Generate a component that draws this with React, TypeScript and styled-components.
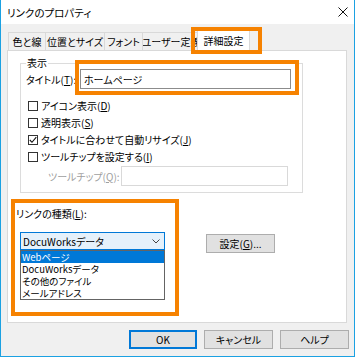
import React from 'react'
import styled, { createGlobalStyle } from 'styled-components'

const GlobalStyle = createGlobalStyle`
  body {
    margin: 0;
    background: #fff;
  }
  * {
    box-sizing: border-box;
  }
`

const Window = styled.div`
  position: relative;
  width: 355px;
  height: 357px;
  display: flex;
  flex-direction: column;
  background: #f0f0f0;
  border: 1px solid #1ba1e2;
  border-top: none;
  font-family: 'Noto Sans CJK JP', 'Noto Sans', sans-serif;
  font-size: 10px;
  font-feature-settings: 'palt';
  color: #000;
`

const TitleBar = styled.div`
  height: 24px;
  flex: none;
  display: flex;
  align-items: center;
  justify-content: space-between;
  padding: 0 6px;
  background: #fff;
  font-size: 10.5px;
`

const Body = styled.div`
  flex: 1;
  padding: 6px 5px 0 6px;
  display: flex;
  flex-direction: column;
`

const TabRow = styled.div`
  display: flex;
  align-items: flex-end;
  height: 20px;
  margin-left: 1px;
`

const Tab = styled.div<{ $w: number; $active?: boolean }>`
  width: ${({ $w }) => $w}px;
  height: ${({ $active }) => ($active ? 22 : 18)}px;
  margin-right: -1px;
  margin-left: ${({ $active }) => ($active ? -2 : 0)}px;
  margin-bottom: ${({ $active }) => ($active ? -1 : 0)}px;
  display: flex;
  align-items: center;
  justify-content: center;
  white-space: nowrap;
  overflow: hidden;
  background: ${({ $active }) => ($active ? '#fff' : '#f0f0f0')};
  border: 1px solid #d9d9d9;
  border-bottom: none;
  position: relative;
  z-index: ${({ $active }) => ($active ? 2 : 1)};
`

const Panel = styled.div`
  height: 273px;
  margin-right: 2px;
  padding: 6px 12px 0 12px;
  background: #fff;
  border: 1px solid #d9d9d9;
  display: flex;
  flex-direction: column;
`

const Group = styled.fieldset`
  margin: 0;
  width: 283px;
  padding: 0 10px 6px 5px;
  border: 1px solid #dcdcdc;
`

const Legend = styled.legend`
  padding: 0 1px;
  line-height: 12px;
`

const FieldRow = styled.div<{ $indent?: number }>`
  display: flex;
  align-items: center;
  height: 20px;
  padding-left: ${({ $indent }) => $indent ?? 0}px;
`

const FieldLabel = styled.span<{ $w: number; $disabled?: boolean }>`
  width: ${({ $w }) => $w}px;
  flex: none;
  white-space: nowrap;
  color: ${({ $disabled }) => ($disabled ? '#a0a0a0' : '#000')};
`

const TextBox = styled.div<{ $w: number; $disabled?: boolean }>`
  width: ${({ $w }) => $w}px;
  height: 20px;
  display: flex;
  align-items: center;
  padding-left: 3px;
  background: #fff;
  border: 1px solid ${({ $disabled }) => ($disabled ? '#d9d9d9' : '#8c8c8c')};
`

const CheckList = styled.div`
  margin: 8px 0 1px 2px;
  display: flex;
  flex-direction: column;
`

const CheckRow = styled.label`
  height: 17px;
  display: flex;
  align-items: center;
  gap: 3px;
  white-space: nowrap;
`

const Box = styled.span`
  width: 10px;
  height: 10px;
  flex: none;
  display: flex;
  align-items: center;
  justify-content: center;
  background: #fff;
  border: 1px solid #333;
`

const SectionLabel = styled.div`
  margin: 15px 0 0 -4px;
  line-height: 12px;
`

const ComboRow = styled.div`
  margin-top: 12px;
  display: flex;
  align-items: flex-start;
`

const ComboWrap = styled.div`
  position: relative;
  width: 145px;
`

const Combo = styled.div`
  height: 18px;
  display: flex;
  align-items: center;
  justify-content: space-between;
  padding: 0 4px 0 2px;
  background: #e5f1fb;
  border: 1px solid #0078d7;
`

const DropList = styled.div`
  position: absolute;
  top: 100%;
  left: 0;
  width: 145px;
  background: #fff;
  border: 1px solid #646464;
  z-index: 3;
`

const DropItem = styled.div<{ $selected?: boolean }>`
  height: 12px;
  display: flex;
  align-items: center;
  padding-left: 1px;
  white-space: nowrap;
  overflow: hidden;
  font-size: 9.5px;
  line-height: 10px;
  background: ${({ $selected }) => ($selected ? '#0078d7' : '#fff')};
  color: ${({ $selected }) => ($selected ? '#fff' : '#000')};
`

const Button = styled.div<{ $w: number; $default?: boolean }>`
  width: ${({ $w }) => $w}px;
  height: 19px;
  display: flex;
  align-items: center;
  justify-content: center;
  background: #e1e1e1;
  border: 1px solid ${({ $default }) => ($default ? '#0078d7' : '#adadad')};
  box-shadow: ${({ $default }) => ($default ? 'inset 0 0 0 1px #0078d7' : 'none')};
`

const SetButton = styled(Button)`
  margin: 2px 0 0 41px;
`

const Footer = styled.div`
  margin-top: 7px;
  display: flex;
  justify-content: flex-end;
  gap: 7px;
`

const Highlight = styled.div<{ $x: number; $y: number; $w: number; $h: number }>`
  position: absolute;
  left: ${({ $x }) => $x}px;
  top: ${({ $y }) => $y}px;
  width: ${({ $w }) => $w}px;
  height: ${({ $h }) => $h}px;
  border: 4px solid #f68200;
  pointer-events: none;
  z-index: 5;
`

const CloseIcon = () => (
  <svg width="10" height="10" viewBox="0 0 10 10">
    <path d="M0.5 0.5 L9.5 9.5 M9.5 0.5 L0.5 9.5" stroke="#111" strokeWidth="1" fill="none" />
  </svg>
)

const Check = () => (
  <svg width="8" height="8" viewBox="0 0 8 8">
    <path d="M0.8 4 L3 6.3 L7.3 1.2" stroke="#111" strokeWidth="1.1" fill="none" />
  </svg>
)

const Chevron = () => (
  <svg width="8" height="5" viewBox="0 0 8 5">
    <path d="M0.5 0.5 L4 4 L7.5 0.5" stroke="#444" strokeWidth="1" fill="none" />
  </svg>
)

const Mnemonic = styled.u``

const checks = [
  { label: 'アイコン表示', key: 'D', checked: false },
  { label: '透明表示', key: 'S', checked: false },
  { label: 'タイトルに合わせて自動リサイズ', key: 'J', checked: true },
  { label: 'ツールチップを設定する', key: 'I', checked: false },
]

const linkTypes = ['Webページ', 'DocuWorksデータ', 'その他のファイル', 'メールアドレス']

export default function App() {
  return (
    <>
      <GlobalStyle />
      <Window>
        <TitleBar>
          <span>リンクのプロパティ</span>
          <CloseIcon />
        </TitleBar>
        <Body>
          <TabRow>
            <Tab $w={38}>色と線</Tab>
            <Tab $w={60}>位置とサイズ</Tab>
            <Tab $w={39}>フォント</Tab>
            <Tab $w={58}>ユーザー定義</Tab>
            <Tab $w={53} $active>
              詳細設定
            </Tab>
          </TabRow>
          <Panel>
            <Group>
              <Legend>表示</Legend>
              <FieldRow>
                <FieldLabel $w={54}>
                  タイトル(<Mnemonic>T</Mnemonic>):
                </FieldLabel>
                <TextBox $w={211}>ホームページ</TextBox>
              </FieldRow>
              <CheckList>
                {checks.map((c) => (
                  <CheckRow key={c.key}>
                    <Box>{c.checked && <Check />}</Box>
                    <span>
                      {c.label}(<Mnemonic>{c.key}</Mnemonic>)
                    </span>
                  </CheckRow>
                ))}
              </CheckList>
              <FieldRow $indent={22}>
                <FieldLabel $w={73} $disabled>
                  ツールチップ(<Mnemonic>Q</Mnemonic>):
                </FieldLabel>
                <TextBox $w={167} $disabled />
              </FieldRow>
            </Group>
            <SectionLabel>
              リンクの種類(<Mnemonic>L</Mnemonic>):
            </SectionLabel>
            <ComboRow>
              <ComboWrap>
                <Combo>
                  <span>DocuWorksデータ</span>
                  <Chevron />
                </Combo>
                <DropList>
                  {linkTypes.map((t, i) => (
                    <DropItem key={t} $selected={i === 0}>
                      {t}
                    </DropItem>
                  ))}
                </DropList>
              </ComboWrap>
              <SetButton $w={69}>
                設定(<Mnemonic>G</Mnemonic>)...
              </SetButton>
            </ComboRow>
          </Panel>
          <Footer>
            <Button $w={68} $default>
              OK
            </Button>
            <Button $w={69}>キャンセル</Button>
            <Button $w={69}>ヘルプ</Button>
          </Footer>
        </Body>
        <Highlight $x={190} $y={27} $w={71} $h={27} />
        <Highlight $x={74} $y={60} $w={224} $h={35} />
        <Highlight $x={10} $y={199} $w={168} $h={117} />
      </Window>
    </>
  )
}
